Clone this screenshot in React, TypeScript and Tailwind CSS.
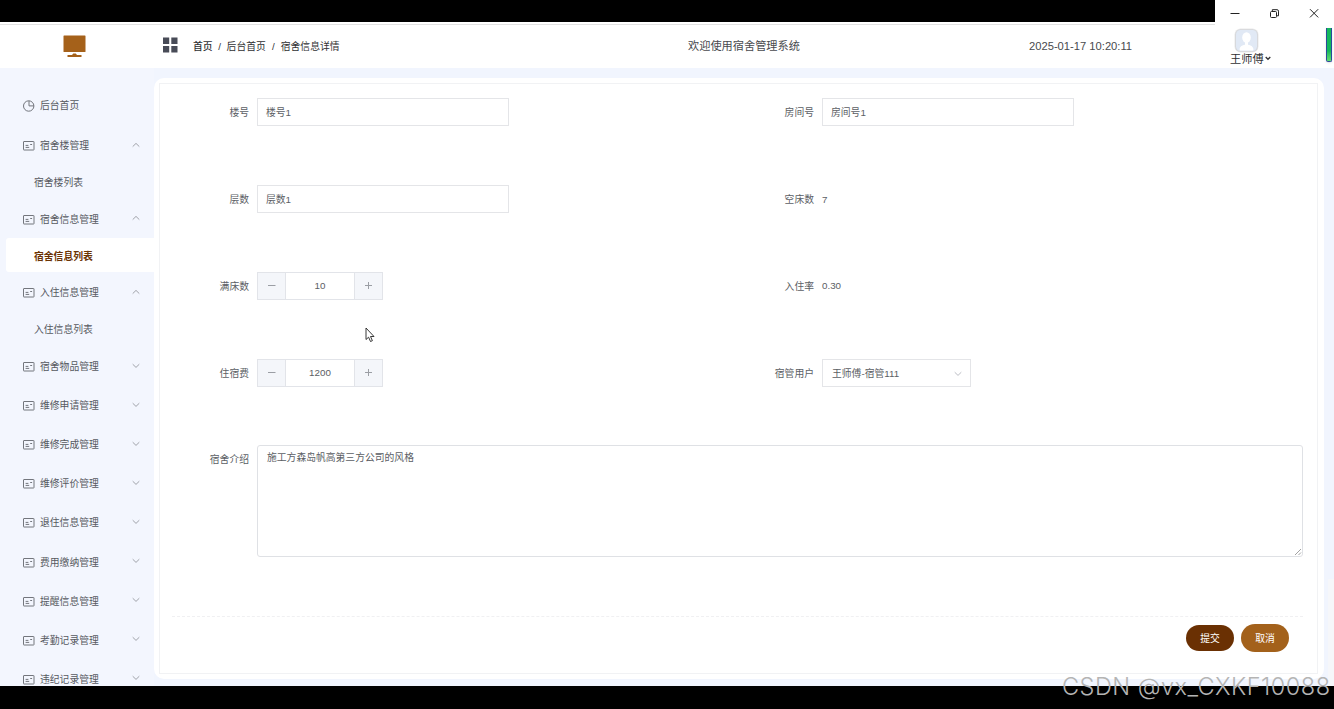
import type { ReactNode } from "react";

type MenuGroup = {
  title: string;
  child?: string;
  active?: boolean;
};

const menu: MenuGroup[] = [
  { title: "宿舍楼管理", child: "宿舍楼列表" },
  { title: "宿舍信息管理", child: "宿舍信息列表", active: true },
  { title: "入住信息管理", child: "入住信息列表" },
  { title: "宿舍物品管理" },
  { title: "维修申请管理" },
  { title: "维修完成管理" },
  { title: "维修评价管理" },
  { title: "退住信息管理" },
  { title: "费用缴纳管理" },
  { title: "提醒信息管理" },
  { title: "考勤记录管理" },
  { title: "违纪记录管理" },
];

function Chevron({ up, className }: { up?: boolean; className?: string }) {
  return (
    <svg
      width="8"
      height="6"
      viewBox="0 0 8 6"
      fill="none"
      stroke="currentColor"
      strokeWidth="0.9"
      className={className}
    >
      <path d={up ? "M0.7 4.6 4 1.4l3.3 3.2" : "M0.7 1.2 4 4.4l3.3-3.2"} />
    </svg>
  );
}

function PieIcon() {
  return (
    <svg width="12" height="12" viewBox="0 0 12 12" fill="none" stroke="#73767d" strokeWidth="1">
      <circle cx="5.7" cy="6" r="5.2" />
      <path d="M6 0.8v5.1h5" />
    </svg>
  );
}

function PostcardIcon() {
  return (
    <svg width="12" height="10" viewBox="0 0 12 10" fill="none" stroke="#73767d" strokeWidth="1">
      <rect x="0.5" y="0.5" width="10.5" height="8.5" rx="0.4" />
      <path d="M2.6 4.4h2.8M2.6 6.4h3.6M7.2 3.5h1.9" />
    </svg>
  );
}

function Sidebar() {
  return (
    <aside className="w-[154px] shrink-0 overflow-hidden bg-[#f3f6fe] pt-[18px] text-[#565960]">
      <div className="flex h-[39px] items-center gap-[5px] pl-[23px]">
        <PieIcon />
        <span>后台首页</span>
      </div>
      {menu.map((group) => (
        <div key={group.title}>
          <div className="flex h-[39.1px] items-center pt-[3px] pl-[23px]">
            <PostcardIcon />
            <span className="ml-[5px]">{group.title}</span>
            <Chevron
              up={!!group.child}
              className="mr-[14px] mb-[3px] ml-auto text-[#96999f]"
            />
          </div>
          {group.child && (
            <div
              className={
                group.active
                  ? "ml-[6px] flex h-[34.6px] items-center rounded-l-[3px] bg-white pt-[3px] pl-7 font-bold text-[#6b3303]"
                  : "ml-[6px] flex h-[34.6px] items-center pt-[3px] pl-7"
              }
            >
              {group.child}
            </div>
          )}
        </div>
      ))}
    </aside>
  );
}

function Header() {
  return (
    <header className="flex h-[43px] shrink-0 items-center bg-white text-[#303133]">
      <div className="flex w-[154px] shrink-0 pl-[63px]">
        <svg width="23" height="23" viewBox="0 0 23 23" fill="#a5611a">
          <rect x="0.5" y="0.5" width="22" height="16.5" rx="0.6" />
          <path d="M9 20l1.3-1.4h2.4L14 20h4.5v2h-14v-2z" />
        </svg>
      </div>
      <svg width="16" height="16" viewBox="0 0 16 16" fill="#484b57" className="ml-2 mb-[4px]">
        <rect x="1" y="0.5" width="6.2" height="6.5" />
        <rect x="9.3" y="0.5" width="6.2" height="6.5" />
        <rect x="1" y="9" width="6.2" height="6.5" />
        <rect x="9.3" y="9" width="6.2" height="6.5" />
      </svg>
      <nav className="ml-[15px] flex w-[495px] shrink-0">
        <span className="font-medium">首页</span>
        <span className="w-[14px] text-center">/</span>
        <span>后台首页</span>
        <span className="w-[15px] text-center">/</span>
        <span>宿舍信息详情</span>
      </nav>
      <div className="w-[341px] shrink-0 pb-px text-[11.2px] text-[#484a4e]">欢迎使用宿舍管理系统</div>
      <div className="w-[200px] shrink-0 pb-[2px] text-[11.2px] text-[#484a4e]">2025-01-17 10:20:11</div>
      <div className="flex flex-col text-[11.2px] leading-[13px]">
        <svg width="26" height="25" viewBox="0 0 26 25" className="ml-[5px]">
          <rect x="0.5" y="0.5" width="24" height="24" rx="6" fill="#e9e9ea" />
          <rect x="1.2" y="1.2" width="22.6" height="22.6" rx="5.3" fill="#d3d5d9" />
          <rect x="2" y="2" width="21" height="21" rx="4.5" fill="#e1e9f5" />
          <ellipse cx="12.5" cy="9.5" rx="4.3" ry="5.2" fill="#fff" />
          <path d="M11 12.5h3v4.2c3 .7 5 1.3 5.5 4.8-.5.9-1 1.1-2 1.1H7.5c-1 0-1.5-.2-2-1.1.5-3.5 2.5-4.1 5.5-4.800z" fill="#fff" />
        </svg>
        <div className="flex items-center pl-px">
          <span>王师傅</span>
          <svg width="6" height="5" viewBox="0 0 6 5" fill="none" stroke="#303133" strokeWidth="1.3" className="ml-px mb-[2px]">
            <path d="M0.7 1 3 3.3 5.3 1" />
          </svg>
        </div>
      </div>
    </header>
  );
}

function FormItem({ label, children }: { label: string; children: ReactNode }) {
  return (
    <div className="flex h-7 items-center">
      <label className="w-[85px] shrink-0 pt-px pr-2 text-right">{label}</label>
      {children}
    </div>
  );
}

function TextInput({ value }: { value: string }) {
  return (
    <div className="flex h-7 w-[252px] items-center border border-[#e4e5e8] pt-px pl-2">{value}</div>
  );
}

function NumberInput({ value }: { value: string }) {
  return (
    <div className="flex h-7 w-[126px] border border-[#e2e4e9]">
      <div className="flex w-7 items-center justify-center border-r border-[#e2e4e9] bg-[#f4f6fa]">
        <svg width="8" height="8" viewBox="0 0 8 8" stroke="#9b9ea4">
          <path d="M0 3.5h7.5" />
        </svg>
      </div>
      <div className="flex flex-1 items-center justify-center">{value}</div>
      <div className="flex w-7 items-center justify-center border-l border-[#e2e4e9] bg-[#f4f6fa]">
        <svg width="8" height="8" viewBox="0 0 8 8" stroke="#9b9ea4">
          <path d="M0 3.5h7M3.5 0v7" />
        </svg>
      </div>
    </div>
  );
}

function DormForm() {
  return (
    <div className="flex h-full flex-col border border-[#f1f2f4] pt-[14px] pr-[14px] pl-3 text-[#5b5e64]">
      <div className="grid grid-cols-[565px_1fr] gap-y-[59px]">
        <FormItem label="楼号">
          <TextInput value="楼号1" />
        </FormItem>
        <FormItem label="房间号">
          <TextInput value="房间号1" />
        </FormItem>
        <FormItem label="层数">
          <TextInput value="层数1" />
        </FormItem>
        <FormItem label="空床数">
          <span className="pt-px">7</span>
        </FormItem>
        <FormItem label="满床数">
          <NumberInput value="10" />
        </FormItem>
        <FormItem label="入住率">0.30</FormItem>
        <FormItem label="住宿费">
          <NumberInput value="1200" />
        </FormItem>
        <FormItem label="宿管用户">
          <div className="flex h-7 w-[149px] items-center justify-between border border-[#e4e5e8] pt-px pr-2 pl-[9px]">
            <span>王师傅-宿管111</span>
            <Chevron className="text-[#b3b6bc]" />
          </div>
        </FormItem>
      </div>
      <div className="mt-[58px] flex">
        <label className="w-[85px] shrink-0 pr-2 text-right leading-[30px]">宿舍介绍</label>
        <div className="flex h-[112px] flex-1 justify-between rounded-[3px] border border-[#dfe1e5] pl-[9px]">
          <p className="pt-[4px] leading-[15px]">施工方森岛帆高第三方公司的风格</p>
          <svg width="8" height="8" viewBox="0 0 8 8" stroke="#8a8a8a" strokeWidth="0.8" className="self-end">
            <path d="M1 7 7 1M4.5 7 7 4.5" />
          </svg>
        </div>
      </div>
      <div className="mt-[59px] flex items-center justify-end gap-[7px] border-t border-dashed border-[#f0f0f2] pt-[7px] pr-[14px] text-white">
        <button className="h-[26px] w-12 rounded-full bg-[#6a3003] pt-[2px]">提交</button>
        <button className="h-7 w-12 rounded-full bg-[#a3611b] pt-[2px]">取消</button>
      </div>
    </div>
  );
}

function WindowControls() {
  return (
    <div className="absolute top-0 right-0 flex h-7 w-[119px] items-center bg-white">
      <svg width="119" height="28" viewBox="0 0 119 28" fill="none" stroke="#222" strokeWidth="1">
        <path d="M15.5 13.5h9" />
        <rect x="55.5" y="11.5" width="6" height="6" rx="1" />
        <path d="M57.3 11V9.7h4.7q1.5 0 1.5 1.5V15.8H62" />
        <path d="M95 9.2l8.2 8.2M103.2 9.2 95 17.4" />
      </svg>
    </div>
  );
}

export default function App() {
  return (
    <div className="relative flex h-[709px] w-[1334px] flex-col overflow-hidden bg-black font-['Liberation_Sans','Noto_Sans_CJK_SC',sans-serif] text-[9.8px] leading-[14px] whitespace-nowrap">
      <div className="h-[22px] shrink-0" />
      <div className="h-[3px] shrink-0 border-b border-[#e2e2e2] bg-white" />
      <Header />
      <div className="flex h-[618px] shrink-0">
        <Sidebar />
        <main className="flex-1 bg-[#f1f5fe] pt-[10px] pr-[4px] pb-[7px]">
          <div className="h-full rounded-[10px] bg-white p-[5px] pr-[6px]">
            <DormForm />
          </div>
        </main>
        {/* page scrollbar track */}
        <div className="flex w-[6px] flex-col justify-end bg-[#f1f5fe]">
          <div className="h-[107px] bg-[#f6f7fa]" />
        </div>
      </div>

      <WindowControls />
      <div className="absolute top-7 right-[2px] h-[34px] w-[6px] rounded-b-[2px] border border-t-0 border-[#2b4a9b] bg-linear-to-b from-[#12b85c] from-70% to-[#5fe070] shadow" />
      <svg width="10" height="16" viewBox="0 0 10 16" className="absolute top-[327px] left-[365px]" fill="#fff" stroke="#222" strokeWidth="0.9">
        <path d="M1 1v11.5l2.6-2.3 1.9 4.3 1.9-.8-1.9-4.2H9z" />
      </svg>
      <div className="absolute top-[673px] left-[1062px] font-['Inter','Liberation_Sans',sans-serif] text-[23.5px] leading-[28px] font-light tracking-[0.48px] text-[#b4b4b4]">
        CSDN @vx_CXKF10088
      </div>
    </div>
  );
}
